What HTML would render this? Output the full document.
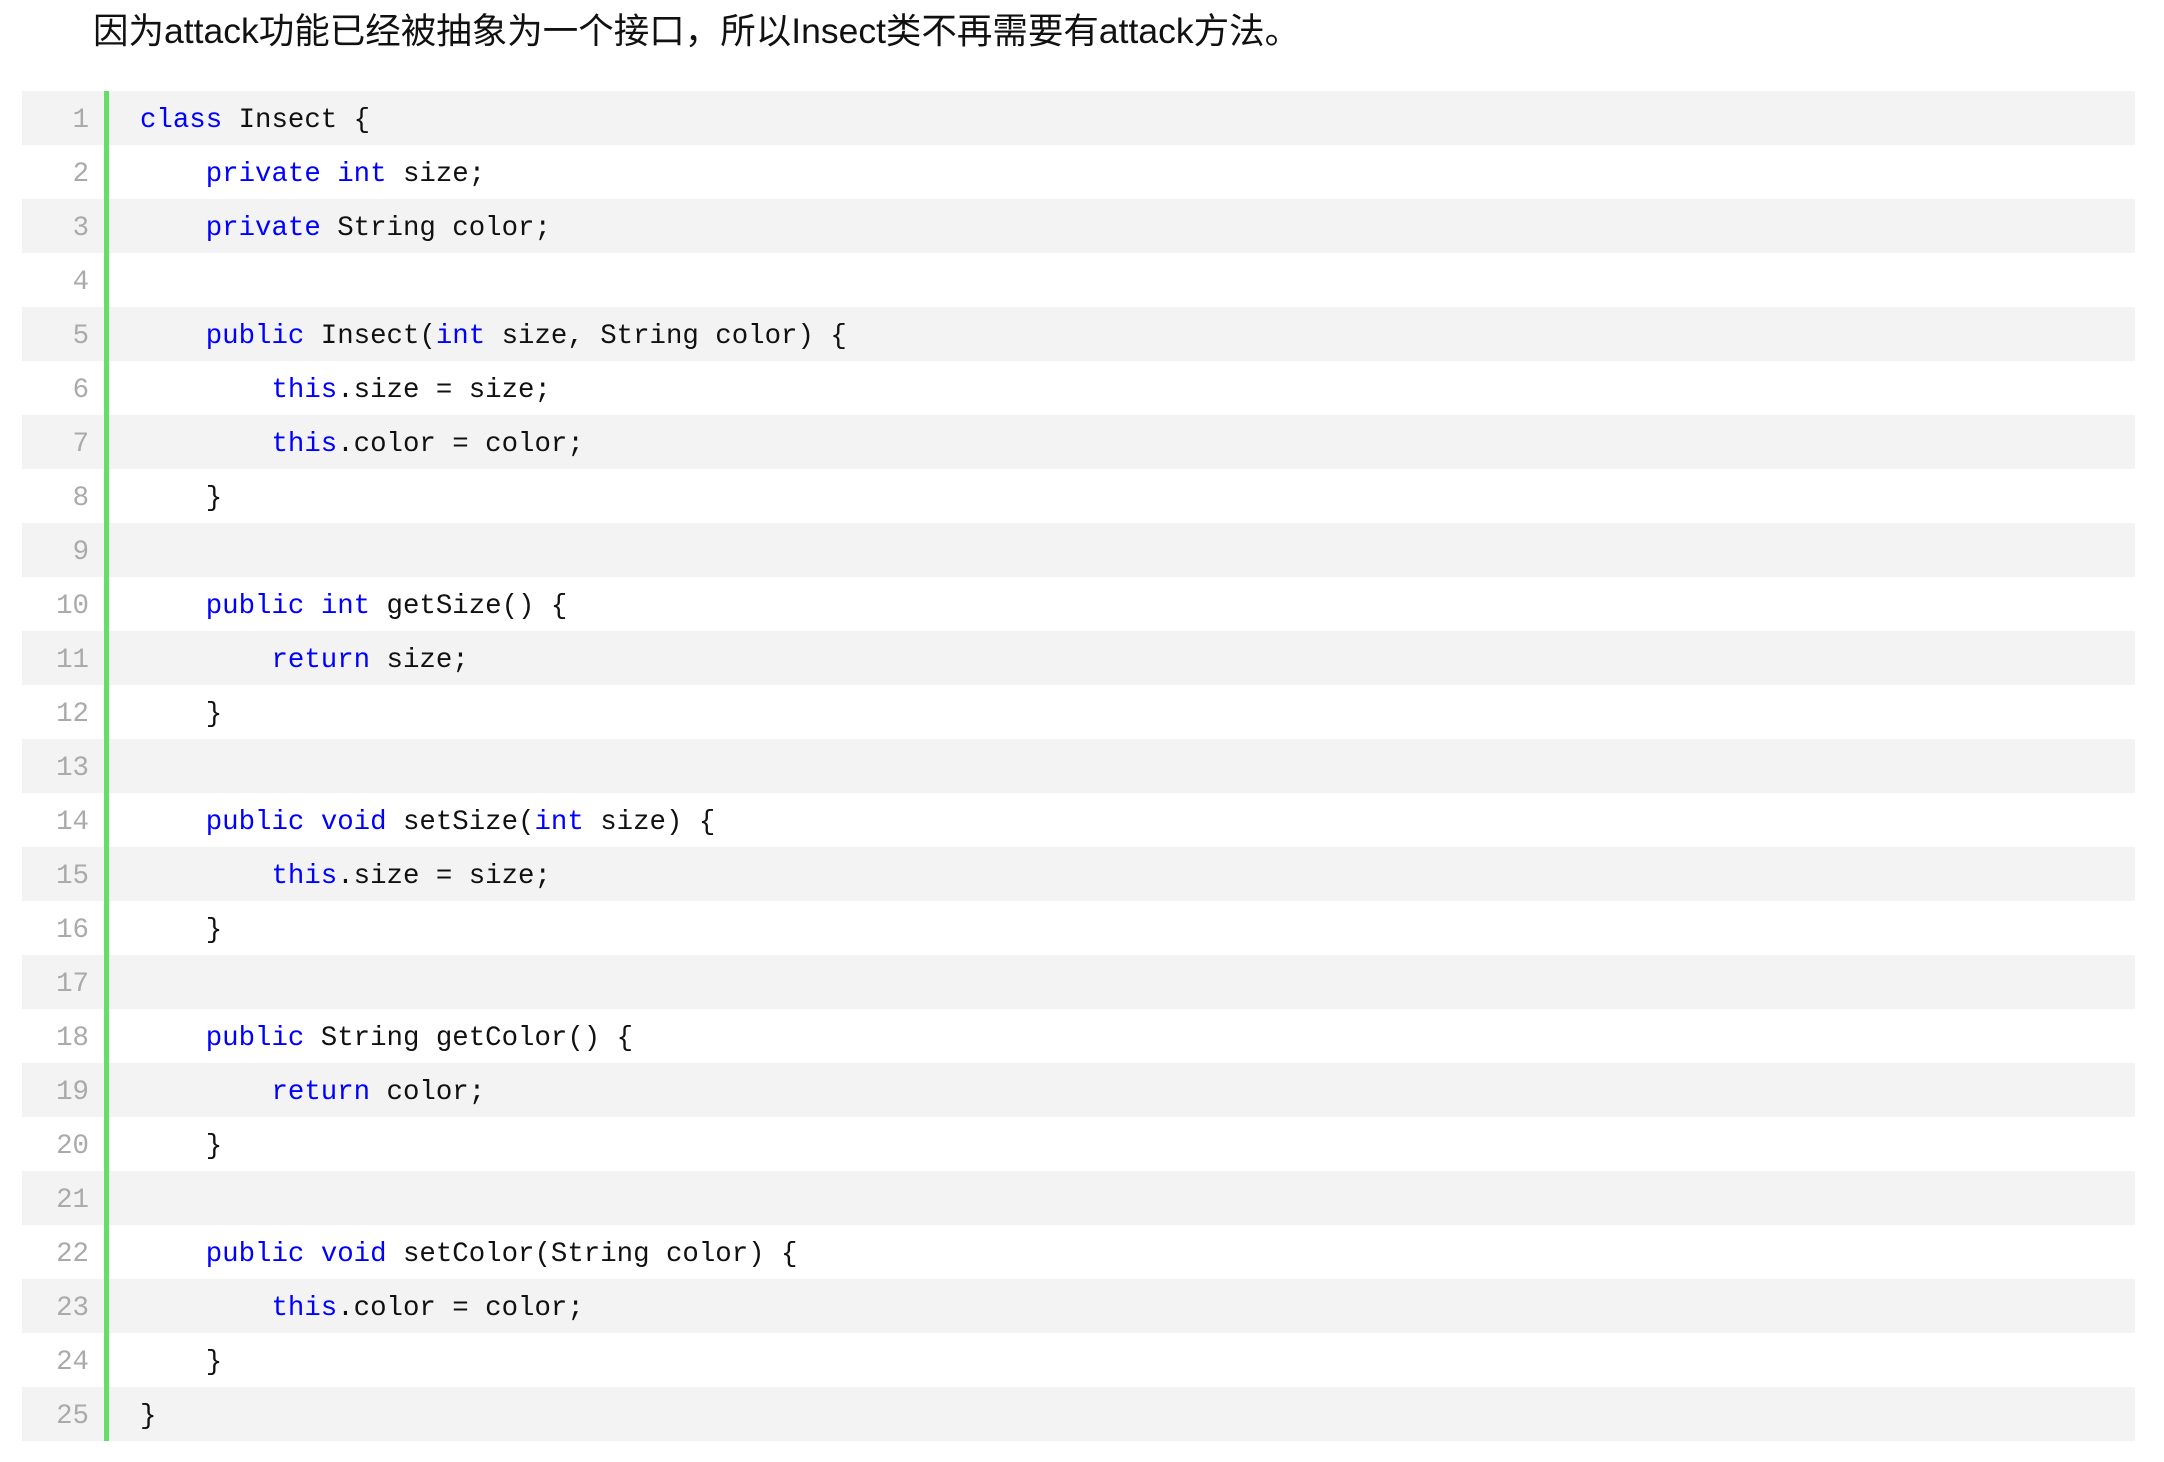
<!DOCTYPE html>
<html><head><meta charset="utf-8"><style>
body{margin:0;background:#fff;width:2164px;height:1462px;overflow:hidden;}
.h{position:absolute;left:93px;top:8px;font:35.5px/46px "Liberation Sans","Noto Sans CJK SC",sans-serif;color:#111;white-space:nowrap;}
.code{position:absolute;left:22px;top:91px;width:2113px;}
.r{height:54px;position:relative;font:27.4px/60px "Liberation Mono",monospace;white-space:pre;color:#111;}
.r:nth-child(odd){background:#f3f3f3;}
.n{position:absolute;left:0;width:67px;text-align:right;color:#aaa;}
.g{position:absolute;left:82px;top:0;width:5px;height:54px;background:#66dd66;}
.c{position:absolute;left:118px;}
.k{color:#0000ff;}
</style></head><body>
<div class="h">因为attack功能已经被抽象为一个接口，所以Insect类不再需要有attack方法。</div>
<div class="code">
<div class="r"><span class="n">1</span><span class="g"></span><span class="c"><span class="k">class</span> Insect {</span></div>
<div class="r"><span class="n">2</span><span class="g"></span><span class="c">    <span class="k">private</span> <span class="k">int</span> size;</span></div>
<div class="r"><span class="n">3</span><span class="g"></span><span class="c">    <span class="k">private</span> String color;</span></div>
<div class="r"><span class="n">4</span><span class="g"></span><span class="c"></span></div>
<div class="r"><span class="n">5</span><span class="g"></span><span class="c">    <span class="k">public</span> Insect(<span class="k">int</span> size, String color) {</span></div>
<div class="r"><span class="n">6</span><span class="g"></span><span class="c">        <span class="k">this</span>.size = size;</span></div>
<div class="r"><span class="n">7</span><span class="g"></span><span class="c">        <span class="k">this</span>.color = color;</span></div>
<div class="r"><span class="n">8</span><span class="g"></span><span class="c">    }</span></div>
<div class="r"><span class="n">9</span><span class="g"></span><span class="c"></span></div>
<div class="r"><span class="n">10</span><span class="g"></span><span class="c">    <span class="k">public</span> <span class="k">int</span> getSize() {</span></div>
<div class="r"><span class="n">11</span><span class="g"></span><span class="c">        <span class="k">return</span> size;</span></div>
<div class="r"><span class="n">12</span><span class="g"></span><span class="c">    }</span></div>
<div class="r"><span class="n">13</span><span class="g"></span><span class="c"></span></div>
<div class="r"><span class="n">14</span><span class="g"></span><span class="c">    <span class="k">public</span> <span class="k">void</span> setSize(<span class="k">int</span> size) {</span></div>
<div class="r"><span class="n">15</span><span class="g"></span><span class="c">        <span class="k">this</span>.size = size;</span></div>
<div class="r"><span class="n">16</span><span class="g"></span><span class="c">    }</span></div>
<div class="r"><span class="n">17</span><span class="g"></span><span class="c"></span></div>
<div class="r"><span class="n">18</span><span class="g"></span><span class="c">    <span class="k">public</span> String getColor() {</span></div>
<div class="r"><span class="n">19</span><span class="g"></span><span class="c">        <span class="k">return</span> color;</span></div>
<div class="r"><span class="n">20</span><span class="g"></span><span class="c">    }</span></div>
<div class="r"><span class="n">21</span><span class="g"></span><span class="c"></span></div>
<div class="r"><span class="n">22</span><span class="g"></span><span class="c">    <span class="k">public</span> <span class="k">void</span> setColor(String color) {</span></div>
<div class="r"><span class="n">23</span><span class="g"></span><span class="c">        <span class="k">this</span>.color = color;</span></div>
<div class="r"><span class="n">24</span><span class="g"></span><span class="c">    }</span></div>
<div class="r"><span class="n">25</span><span class="g"></span><span class="c">}</span></div>
</div>
</body></html>
